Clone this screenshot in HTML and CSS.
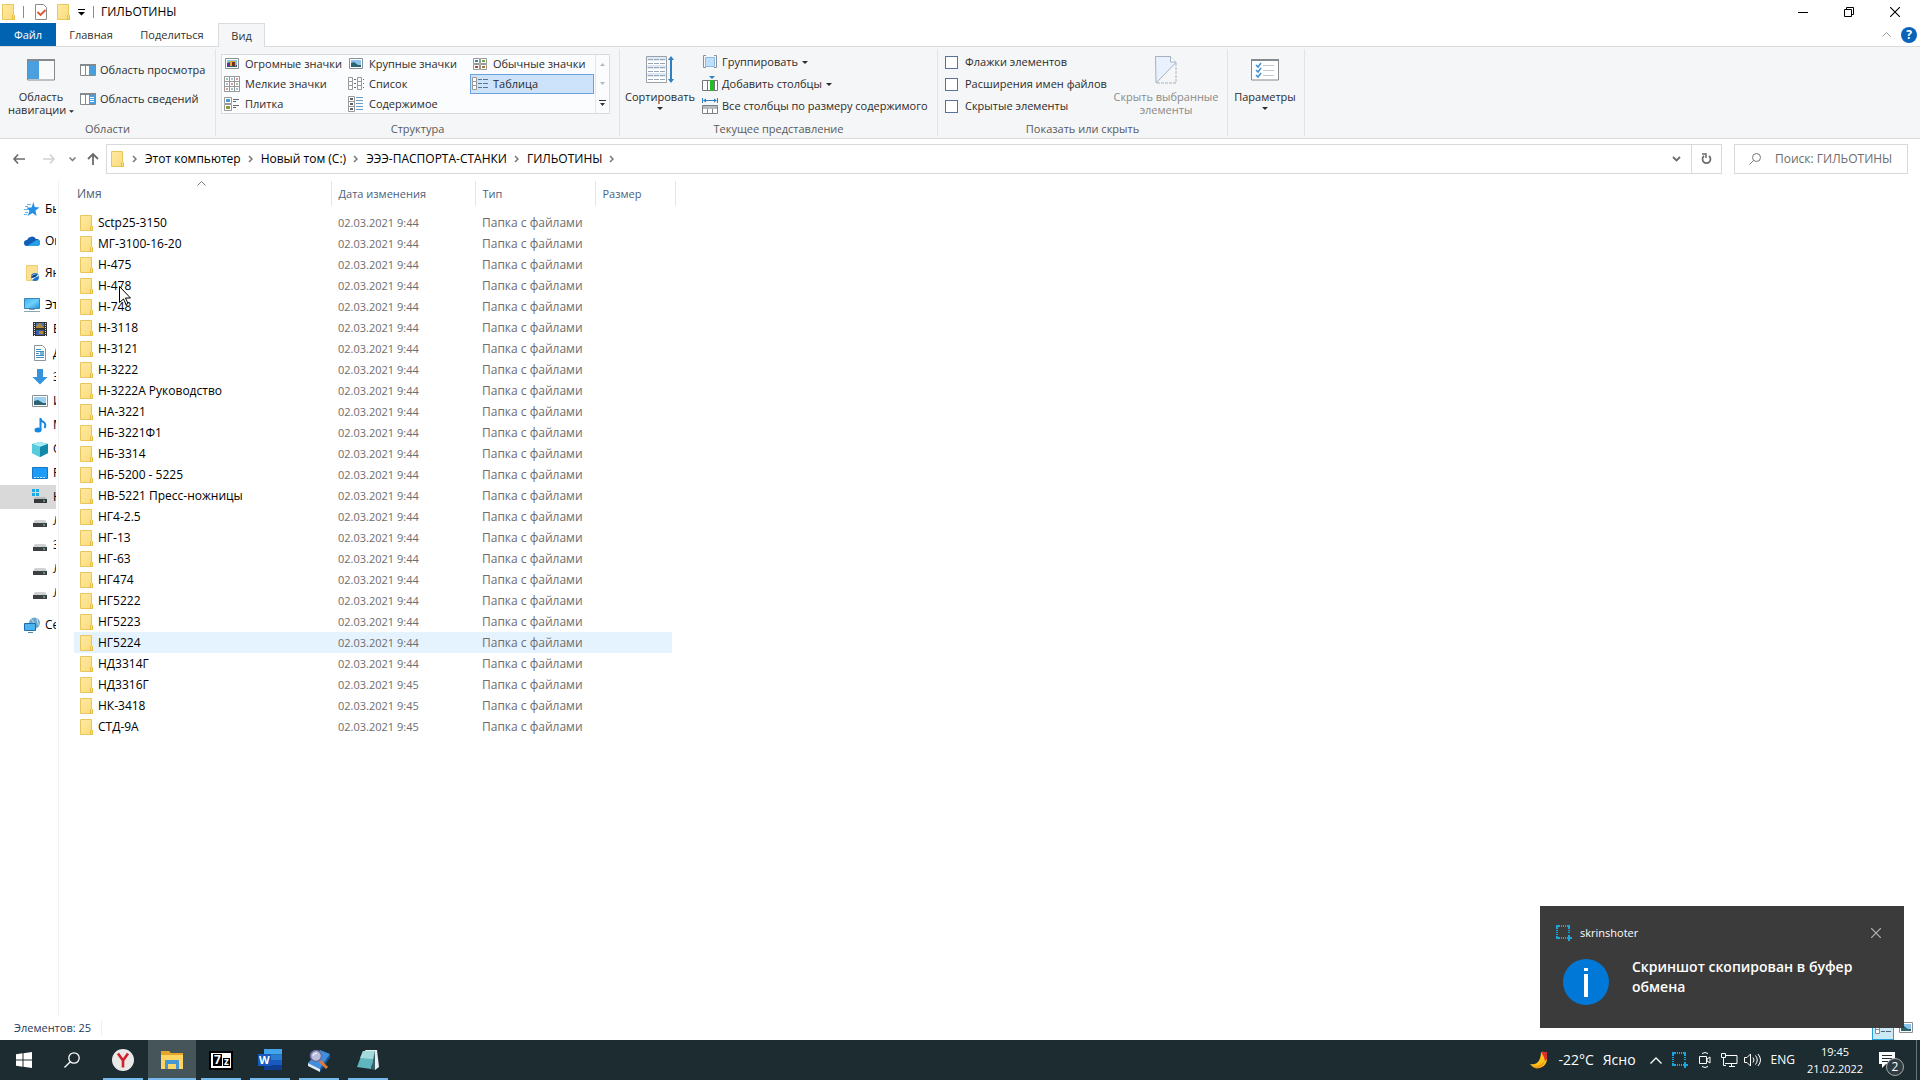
FILE: index.html
```html
<!DOCTYPE html>
<html lang="ru">
<head>
<meta charset="utf-8">
<title>ГИЛЬОТИНЫ</title>
<link rel="stylesheet" href="styles.css">
</head>
<body>
<svg class="defs" aria-hidden="true">
  <defs>
    <linearGradient id="fold" x1="0" y1="0" x2="1" y2="1"><stop offset="0" stop-color="#ffe9a3"/><stop offset="1" stop-color="#fbdc7b"/></linearGradient>
    <linearGradient id="mon" x1="0" y1="0" x2="1" y2="1"><stop offset="0" stop-color="#3fb0ee"/><stop offset=".5" stop-color="#6fd0fb"/><stop offset="1" stop-color="#1f8fdc"/></linearGradient>
  </defs>
  <symbol id="folder" viewBox="0 0 13 16"><path d="M.5.5h11v10l1 1v4H.5z" fill="url(#fold)" stroke="#e8c65a"/><path d="M10.500 15.500v-4l1-1 1 1v4z" fill="#fbdf86" stroke="#e3bd48"/></symbol>
  <symbol id="drive" viewBox="0 0 16 16"><path d="M3 7h10l2 3H1z" fill="#cfd2d4"/><path d="M1 10h14v4H1z" fill="#3c4043"/><path d="M11 11.500h2v1h-2z" fill="#7df07d"/></symbol>
  <symbol id="down" viewBox="0 0 6 3"><path d="M0 0h6L3 3z" fill="currentColor"/></symbol>
  <symbol id="chev" viewBox="0 0 5 8"><path d="M1 1l3 3-3 3" fill="none" stroke="#777" stroke-width="1.500"/></symbol>
  <symbol id="pic" viewBox="0 0 16 16"><path d="M1.500 2.500h13v10h-13z" fill="#fff" stroke="#8a8f94"/><path d="M3 4h10v7H3z" fill="#8cc4ee"/><path d="M3 7l3-1 4 3h3v2H3z" fill="#2c6472"/></symbol>
  <symbol id="snip" viewBox="0 0 16 16"><path d="M0 0h4v2H2v2H0zM5 0h1v2H5zM7 0h1v2H7zM9 0h1v2H9zM11 0h3v4h-2V2h-1zM0 5h2v1H0zM0 7h2v1H0zM0 9h2v1H0zM12 5h2v1h-2zM12 7h2v1h-2zM0 11h2v1h2v2H0zM5 12h1v2H5zM7 12h1v2H7zM9 12h1v2H9zM12 10h2v2h2v2h-2v2h-2v-2h-1v-2h1z" fill="#18a6e0"/></symbol>
</svg>

<div class="window">
  <header class="titlebar">
    <svg class="i13" width="13" height="16"><use href="#folder"/></svg>
    <span class="bar"></span>
    <button class="plain qa-check" aria-label="Свойства"><svg width="12" height="16"><path d="M.5.5h8l3 3v12H.5z" fill="#fff" stroke="#8c8c8c"/><path d="M2.500 8l3 3 5-5" fill="none" stroke="#e0562c" stroke-width="1.800"/></svg></button>
    <button class="plain qa-new" aria-label="Новая папка"><svg width="13" height="16"><use href="#folder"/></svg></button>
    <button class="plain qa-menu" aria-label="Настройка панели"><svg width="7" height="7"><path d="M0 0h7v1H0zM0 3h7L3.500 6.500z"/></svg></button>
    <span class="bar bar2"></span>
    <h1>ГИЛЬОТИНЫ</h1>
    <div class="caption">
      <button class="plain" aria-label="Свернуть"><svg width="10" height="10"><path d="M0 5h10v1H0z"/></svg></button>
      <button class="plain" aria-label="Восстановить"><svg width="10" height="10"><path d="M.5 2.500h7v7h-7zM2.500 2V.5h7v7H8" fill="none" stroke="#000"/></svg></button>
      <button class="plain" aria-label="Закрыть"><svg width="10" height="10"><path d="M0 0l10 10M10 0L0 10" stroke="#000" stroke-width="1.100"/></svg></button>
    </div>
  </header>

  <nav class="tabs">
    <button class="tab file">Файл</button>
    <button class="tab home">Главная</button>
    <button class="tab share">Поделиться</button>
    <button class="tab active">Вид</button>
    <div class="tabs-right">
      <button class="plain" aria-label="Свернуть ленту"><svg width="9" height="5"><path d="M.5 4.500l4-4 4 4" fill="none" stroke="#999"/></svg></button>
      <button class="help" aria-label="Справка">?</button>
    </div>
  </nav>

  <section class="ribbon">
    <div class="group g-panes">
      <div class="group-body">
        <button class="big big-nav">
          <svg width="28" height="22"><path d="M.5 1h27v20H.5z" fill="#fafafa" stroke="#858a8f"/><path d="M0 0h28v2H0z" fill="#858a8f"/><path d="M1 2h11v18H1z" fill="#4a9fdf"/></svg>
          <span>Область<br>навигации <svg width="5" height="3"><use href="#down"/></svg></span>
        </button>
        <div class="stack stack-panes">
          <button class="small"><svg width="16" height="12"><path d="M.5.5h15v11H.5z" fill="#fff" stroke="#858a8f"/><path d="M0 0h16v2H0zM5 1h1v10H5z" fill="#858a8f"/><path d="M9 2h6v9H9z" fill="#4a9fdf"/></svg>Область просмотра</button>
          <button class="small"><svg width="16" height="12"><path d="M.5.5h15v11H.5z" fill="#fff" stroke="#858a8f"/><path d="M0 0h16v2H0zM5 1h1v10H5z" fill="#858a8f"/><path d="M9 2h6v9H9z" fill="#4a9fdf"/><path d="M10 4.500h4M10 6.500h4M10 8.500h4" stroke="#fff"/></svg>Область сведений</button>
        </div>
      </div>
      <div class="group-label">Области</div>
    </div>

    <div class="group g-layout">
      <div class="group-body">
        <div class="gallery">
          <div class="cells">
            <button class="cell"><svg width="16" height="16"><use href="#pic"/><path d="M3 7h3v4H3z" fill="#5a32a8"/><path d="M6 5h6v5H6z" fill="#d8b22c"/><path d="M8 6h3v4H8z" fill="#7c2b20"/></svg>Огромные значки</button>
            <button class="cell"><svg width="16" height="16"><use href="#pic"/></svg>Крупные значки</button>
            <button class="cell"><svg width="16" height="16"><path d="M1.500 2.500h6v5h-6zM8.500 2.500h6v5h-6zM1.500 8.500h6v5h-6zM8.500 8.500h6v5h-6z" fill="#fff" stroke="#999"/><path d="M3 4h3v2H3z" fill="#38a"/><path d="M10 4h3v2h-3z" fill="#6a4"/><path d="M3 10h3v2H3z" fill="#b43"/><path d="M10 10h3v2h-3z" fill="#a73"/></svg>Обычные значки</button>
            <button class="cell"><svg width="16" height="16"><path d="M.5.5h15v15H.5zM.5 5.500h15M.5 10.500h15M5.500.5v15M10.500.5v15" fill="#fff" stroke="#999"/><path d="M3 2v2M13 7v2M8 12v2" stroke="#486"/><path d="M8 2v2M3 7v2M13 12v2" stroke="#48a"/><path d="M13 2v2M8 7v2M3 12v2" stroke="#b33"/></svg>Мелкие значки</button>
            <button class="cell"><svg width="16" height="16"><path d="M.5 1.500h4v4h-4zM.5 5.500h4v4h-4zM.5 9.500h4v4h-4zM9.500 1.500h4v4h-4zM9.500 5.500h4v4h-4zM9.500 9.500h4v4h-4z" fill="#fff" stroke="#999"/><path d="M6 3.500h2M6 7.500h2M6 11.500h2M15 3.500h1M15 7.500h1M15 11.500h1" stroke="#667"/></svg>Список</button>
            <button class="cell selected"><svg width="16" height="16"><path d="M.5 1.500h4v4h-4zM.5 5.500h4v4h-4zM.5 9.500h4v4h-4z" fill="#fff" stroke="#999"/><path d="M6 3.500h4M6 7.500h4M6 11.500h4M11 3.500h5M11 7.500h5M11 11.500h5" stroke="#5c7590"/></svg>Таблица</button>
            <button class="cell"><svg width="16" height="16"><path d="M.5 1.500h7v6h-7zM.5 8.500h7v6h-7z" fill="#fff" stroke="#999"/><path d="M2 3h4v3H2z" fill="#4a9ad6"/><path d="M2 10h4v3H2z" fill="#8a9a3a"/><path d="M9 3.500h6M9 5.500h3M9 9.500h6M9 11.500h3" stroke="#667"/></svg>Плитка</button>
            <button class="cell"><svg width="16" height="16"><path d="M.5.5h6v5h-6zM.5 5.500h6v5h-6zM.5 10.500h6v5h-6z" fill="#fff" stroke="#999"/><path d="M2 3h3M2 8h3M2 13h3" stroke="#567" stroke-width="2"/><path d="M8 1.500h7M8 4.500h7M8 7.500h7M8 10.500h7M8 13.500h7" stroke="#6d9cc4"/></svg>Содержимое</button>
          </div>
          <div class="gallery-scroll">
            <button class="plain" aria-label="Вверх"><svg width="5" height="3"><path d="M0 3h5L2.500 0z" fill="#b5b9be"/></svg></button>
            <button class="plain" aria-label="Вниз"><svg width="5" height="3"><path d="M0 0h5L2.500 3z" fill="#b5b9be"/></svg></button>
            <button class="plain" aria-label="Все виды"><svg width="7" height="6"><path d="M0 0h7v1H0zM1 3h5L3.500 6z" fill="#333"/></svg></button>
          </div>
        </div>
      </div>
      <div class="group-label">Структура</div>
    </div>

    <div class="group g-view">
      <div class="group-body">
        <button class="big big-sort">
          <svg width="28" height="28"><path d="M.5.5h20v26H.5z" fill="#fff" stroke="#9aa0a6"/><path d="M1 1h19v4H1zM1 9h19v4H1zM1 17h19v4H1z" fill="#dbeaf6"/><path d="M2 3.500h17M2 7.500h17M2 11.500h17M2 15.500h17M2 19.500h17M2 23.500h17" stroke="#9aa7b2" stroke-dasharray="5 1"/><path d="M25 2v23" stroke="#2f7fc1" stroke-width="2"/><path d="M22 4l3-4 3 4zM22 23l3 4 3-4z" fill="#2f7fc1"/></svg>
          <span>Сортировать</span><svg width="6" height="3"><use href="#down"/></svg>
        </button>
        <div class="stack">
          <button class="small"><svg width="16" height="16"><path d="M4 1.500H1.500v12H4M12 1.500h2.500v12H12" fill="none" stroke="#8a9095"/><path d="M3.500 3.500h9v9h-9z" fill="#bfe0fb" stroke="#8bbbe5"/></svg>Группировать<svg class="arr" width="6" height="3"><use href="#down"/></svg></button>
          <button class="small"><svg width="16" height="16"><path d="M.5 4.500h15v10H.5z" fill="#fff" stroke="#6f767c"/><path d="M5.500 5v9M12.500 5v9" stroke="#6f767c"/><path d="M8 4h4v11H8z" fill="#25bd25"/><path d="M7 0h6l-3 3z" fill="#2f7fc1"/></svg>Добавить столбцы<svg class="arr" width="6" height="3"><use href="#down"/></svg></button>
          <button class="small"><svg width="16" height="16"><path d="M.5 0v5M15.500 0v5M2 2.500h12" stroke="#2f7fc1"/><path d="M4 .5l-3 2 3 2zM12 .5l3 2-3 2z" fill="#2f7fc1"/><path d="M.5 7.500h15v8H.5zM5.500 10v5M10.500 10v5" fill="#fff" stroke="#7c8287"/><path d="M1 8h14v3H1z" fill="#b5babe"/></svg>Все столбцы по размеру содержимого</button>
        </div>
      </div>
      <div class="group-label">Текущее представление</div>
    </div>

    <div class="group g-show">
      <div class="group-body">
        <div class="stack checks">
          <label><input type="checkbox">Флажки элементов</label>
          <label><input type="checkbox">Расширения имен файлов</label>
          <label><input type="checkbox">Скрытые элементы</label>
        </div>
        <button class="big big-hide" disabled>
          <svg width="22" height="28"><path d="M.5.5h15l5.500 6L1 27z" fill="#e8f1fc" stroke="#a5b2c4"/><path d="M15.500.5V6H21" fill="#fff" stroke="#a5b2c4"/><path d="M21 7v20H1" fill="none" stroke="#a5b2c4" stroke-dasharray="3 1"/></svg>
          <span>Скрыть выбранные<br>элементы</span>
        </button>
      </div>
      <div class="group-label">Показать или скрыть</div>
    </div>

    <div class="group g-options">
      <div class="group-body">
        <button class="big big-opt">
          <svg width="28" height="22"><path d="M.5 1h27v20H.5z" fill="#fff" stroke="#858a8f"/><path d="M0 0h28v2H0z" fill="#858a8f"/><path d="M12 6.500h11M12 11.500h11M12 16.500h11" stroke="#c5c8ca"/><path d="M5 6l2 2 3-4M5 11l2 2 3-4M5 16l2 2 3-4" fill="none" stroke="#3f8fd0" stroke-width="1.500"/></svg>
          <span>Параметры</span><svg width="6" height="3"><use href="#down"/></svg>
        </button>
      </div>
    </div>
  </section>

  <div class="address-row">
    <button class="plain back" aria-label="Назад"><svg width="12" height="10"><path d="M5 .5L1 5l4 4.500M1 5h11" fill="none" stroke="#6b6b6b" stroke-width="1.600"/></svg></button>
    <button class="plain fwd" aria-label="Вперед"><svg width="12" height="10"><path d="M7 .5L11 5 7 9.500M11 5H0" fill="none" stroke="#d2d2d2" stroke-width="1.600"/></svg></button>
    <button class="plain hist" aria-label="Последние"><svg width="7" height="5"><path d="M.5.5l3 3 3-3" fill="none" stroke="#777" stroke-width="1.500"/></svg></button>
    <button class="plain up" aria-label="Вверх"><svg width="12" height="12"><path d="M1 6l5-5 5 5M6 1v11" fill="none" stroke="#6b6b6b" stroke-width="1.800"/></svg></button>
    <div class="address">
      <svg class="addr-icon" width="13" height="16"><use href="#folder"/></svg>
      <svg class="chev" width="5" height="8"><use href="#chev"/></svg>
      <a href="#">Этот компьютер</a><svg class="chev" width="5" height="8"><use href="#chev"/></svg>
      <a href="#">Новый том (C:)</a><svg class="chev" width="5" height="8"><use href="#chev"/></svg>
      <a href="#">ЭЭЭ-ПАСПОРТА-СТАНКИ</a><svg class="chev" width="5" height="8"><use href="#chev"/></svg>
      <a href="#">ГИЛЬОТИНЫ</a><svg class="chev" width="5" height="8"><use href="#chev"/></svg>
      <button class="plain drop" aria-label="Журнал"><svg width="9" height="6"><path d="M1 1l3.500 3.500L8 1" fill="none" stroke="#6b6b6b" stroke-width="1.800"/></svg></button>
      <button class="plain refresh" aria-label="Обновить"><svg width="11" height="12"><path d="M8 3a4 4 0 1 1-5 0" fill="none" stroke="#6b6b6b" stroke-width="1.700"/><path d="M1 1h4v4" fill="none" stroke="#6b6b6b" stroke-width="1.500"/></svg></button>
    </div>
    <div class="search">
      <svg width="12" height="12"><path d="M5 7L.5 11.500" stroke="#777"/><circle cx="7.500" cy="4.500" r="4" fill="none" stroke="#777"/></svg>
      <input type="text" aria-label="Поиск" placeholder="Поиск: ГИЛЬОТИНЫ">
    </div>
  </div>

  <main class="content">
    <nav class="tree">
      <a href="#" class="node top"><svg width="16" height="16"><path d="M9.500 1l1.200 5 4.800.6-4 3 1 5.400-4-3-5 3 2-5L2.500 6.500h5z" fill="#2490e4"/><path d="M3 3.500h4M1 5.500h3M0 8.500h4M1 11.500h3M0 13.500h3" stroke="#63b8f0"/></svg>Бы</a>
      <a href="#" class="node top"><svg width="16" height="16"><path d="M3 13a3 3 0 0 1 0-6 5 5 0 0 1 9-1 3.500 3.500 0 0 1 1 7z" fill="#0f5db5"/><path d="M3 13l8-5a3 3 0 1 1 2 5z" fill="#279fe8"/></svg>On</a>
      <a href="#" class="node top"><svg width="16" height="16"><path d="M2.500.5h11v15h-11z" fill="#fde192" stroke="#efcf71"/><circle cx="11" cy="12" r="4" fill="#1976c9"/><path d="M8 15a4 4 0 0 1 7-4l-3 1z" fill="#fff"/><path d="M7 13q1-4 7-4-2 4-7 4z" fill="#07437f"/></svg>Ян</a>
      <a href="#" class="node top pc"><svg width="16" height="16"><path d="M.5 1.500h15v10H.5z" fill="url(#mon)" stroke="#3a83b5"/><path d="M0 14.500h16M5 12.500h6" stroke="#8ba5b5"/></svg>Эт</a>
      <a href="#" class="node"><svg width="16" height="16"><path d="M1 1h14v14H1z" fill="#333"/><path d="M2.500 2v13M13.500 2v13" stroke="#ddd" stroke-dasharray="1 1"/><path d="M4 2h8v5H4z" fill="#4675b8"/><path d="M4 9h8v5H4z" fill="#3b5fa8"/><path d="M4 5l4-3 4 5H4zM7 10h4v3H7z" fill="#b08a38"/></svg>Ви</a>
      <a href="#" class="node"><svg width="16" height="16"><path d="M2.500.5h8l3 3v12h-11z" fill="#fff" stroke="#8c959c"/><path d="M4 4.500h5M4 6.500h8M4 8.500h3M4 10.500h8M4 12.500h8" stroke="#3e8cc0"/><path d="M8 7h4v3H8z" fill="#72b1d8"/></svg>До</a>
      <a href="#" class="node"><svg width="16" height="16"><path d="M5 0h6v8h4.500L8 15.500.5 8H5z" fill="#3593dd"/></svg>За</a>
      <a href="#" class="node"><svg width="16" height="16"><path d="M.5 2.500h15v11H.5z" fill="#fff" stroke="#8a8f94"/><path d="M2 4h12v8H2z" fill="#9cd0f2"/><path d="M2 8l4-1 5 3h3v2H2z" fill="#2c6472"/></svg>Из</a>
      <a href="#" class="node"><svg width="16" height="16"><path d="M8.500 13V1q0 3 3 4 3 2 1 6" fill="none" stroke="#1488e0" stroke-width="2"/><ellipse cx="6" cy="13" rx="3.500" ry="2.500" fill="#1488e0"/></svg>Му</a>
      <a href="#" class="node"><svg width="16" height="16"><path d="M0 3l8-2 8 2v9l-8 4-8-4z" fill="#2ba8c5"/><path d="M0 3l8-2 8 2-8 3z" fill="#a6ecf2"/><path d="M0 3l8 3v10l-8-4z" fill="#56cbdc"/><path d="M8 6l8-3v9l-8 4z" fill="#1388a8"/></svg>Об</a>
      <a href="#" class="node"><svg width="16" height="16"><path d="M.5 2.500h15v11H.5z" fill="#1e9bf6" stroke="#1476c4"/><path d="M2 12.500h12" stroke="#bfe4ff" stroke-dasharray="2 1"/></svg>Ра</a>
      <a href="#" class="node current"><svg width="16" height="16"><path d="M0 0h3v3H0zM4 0h3v3H4zM0 4h3v3H0zM4 4h3v3H4z" fill="#18a9e6"/><path d="M3 8h10l2 2H1z" fill="#b9bcbe"/><path d="M2 10h13v4H2z" fill="#35393c"/><path d="M11 11.500h2v1h-2z" fill="#7df07d"/></svg>Но</a>
      <a href="#" class="node"><svg width="16" height="16"><use href="#drive"/></svg>Ло</a>
      <a href="#" class="node"><svg width="16" height="16"><use href="#drive"/></svg>За</a>
      <a href="#" class="node"><svg width="16" height="16"><use href="#drive"/></svg>Ло</a>
      <a href="#" class="node last"><svg width="16" height="16"><use href="#drive"/></svg>Ло</a>
      <a href="#" class="node top"><svg width="16" height="16"><circle cx="10.500" cy="6" r="5.500" fill="#6fa9cd"/><path d="M7 2q4 3 2 9M13 1q0 5 2 7" stroke="#c7e3f2" fill="none"/><path d="M.5 6.500h11v7H.5z" fill="#4cb4f0" stroke="#1e6fae"/><path d="M4 15.500h5" stroke="#5b8aa8"/></svg>Се</a>
    </nav>

    <div class="files">
      <table>
        <colgroup><col class="c-name"><col class="c-date"><col class="c-type"><col class="c-size"></colgroup>
        <thead><tr><th class="sorted">Имя<svg class="sort-mark" width="9" height="5"><path d="M.5 4.500l4-4 4 4" fill="none" stroke="#777"/></svg></th><th>Дата изменения</th><th>Тип</th><th>Размер</th></tr></thead>
        <tbody>
          <tr><td><svg width="13" height="16"><use href="#folder"/></svg>Sctp25-3150</td><td>02.03.2021 9:44</td><td>Папка с файлами</td><td></td></tr>
          <tr><td><svg width="13" height="16"><use href="#folder"/></svg>МГ-3100-16-20</td><td>02.03.2021 9:44</td><td>Папка с файлами</td><td></td></tr>
          <tr><td><svg width="13" height="16"><use href="#folder"/></svg>Н-475</td><td>02.03.2021 9:44</td><td>Папка с файлами</td><td></td></tr>
          <tr><td><svg width="13" height="16"><use href="#folder"/></svg>Н-478</td><td>02.03.2021 9:44</td><td>Папка с файлами</td><td></td></tr>
          <tr><td><svg width="13" height="16"><use href="#folder"/></svg>Н-748</td><td>02.03.2021 9:44</td><td>Папка с файлами</td><td></td></tr>
          <tr><td><svg width="13" height="16"><use href="#folder"/></svg>Н-3118</td><td>02.03.2021 9:44</td><td>Папка с файлами</td><td></td></tr>
          <tr><td><svg width="13" height="16"><use href="#folder"/></svg>Н-3121</td><td>02.03.2021 9:44</td><td>Папка с файлами</td><td></td></tr>
          <tr><td><svg width="13" height="16"><use href="#folder"/></svg>Н-3222</td><td>02.03.2021 9:44</td><td>Папка с файлами</td><td></td></tr>
          <tr><td><svg width="13" height="16"><use href="#folder"/></svg>Н-3222А Руководство</td><td>02.03.2021 9:44</td><td>Папка с файлами</td><td></td></tr>
          <tr><td><svg width="13" height="16"><use href="#folder"/></svg>НА-3221</td><td>02.03.2021 9:44</td><td>Папка с файлами</td><td></td></tr>
          <tr><td><svg width="13" height="16"><use href="#folder"/></svg>НБ-3221Ф1</td><td>02.03.2021 9:44</td><td>Папка с файлами</td><td></td></tr>
          <tr><td><svg width="13" height="16"><use href="#folder"/></svg>НБ-3314</td><td>02.03.2021 9:44</td><td>Папка с файлами</td><td></td></tr>
          <tr><td><svg width="13" height="16"><use href="#folder"/></svg>НБ-5200 - 5225</td><td>02.03.2021 9:44</td><td>Папка с файлами</td><td></td></tr>
          <tr><td><svg width="13" height="16"><use href="#folder"/></svg>НВ-5221 Пресс-ножницы</td><td>02.03.2021 9:44</td><td>Папка с файлами</td><td></td></tr>
          <tr><td><svg width="13" height="16"><use href="#folder"/></svg>НГ4-2.5</td><td>02.03.2021 9:44</td><td>Папка с файлами</td><td></td></tr>
          <tr><td><svg width="13" height="16"><use href="#folder"/></svg>НГ-13</td><td>02.03.2021 9:44</td><td>Папка с файлами</td><td></td></tr>
          <tr><td><svg width="13" height="16"><use href="#folder"/></svg>НГ-63</td><td>02.03.2021 9:44</td><td>Папка с файлами</td><td></td></tr>
          <tr><td><svg width="13" height="16"><use href="#folder"/></svg>НГ474</td><td>02.03.2021 9:44</td><td>Папка с файлами</td><td></td></tr>
          <tr><td><svg width="13" height="16"><use href="#folder"/></svg>НГ5222</td><td>02.03.2021 9:44</td><td>Папка с файлами</td><td></td></tr>
          <tr><td><svg width="13" height="16"><use href="#folder"/></svg>НГ5223</td><td>02.03.2021 9:44</td><td>Папка с файлами</td><td></td></tr>
          <tr class="hover"><td><svg width="13" height="16"><use href="#folder"/></svg>НГ5224</td><td>02.03.2021 9:44</td><td>Папка с файлами</td><td></td></tr>
          <tr><td><svg width="13" height="16"><use href="#folder"/></svg>НД3314Г</td><td>02.03.2021 9:44</td><td>Папка с файлами</td><td></td></tr>
          <tr><td><svg width="13" height="16"><use href="#folder"/></svg>НД3316Г</td><td>02.03.2021 9:45</td><td>Папка с файлами</td><td></td></tr>
          <tr><td><svg width="13" height="16"><use href="#folder"/></svg>НК-3418</td><td>02.03.2021 9:45</td><td>Папка с файлами</td><td></td></tr>
          <tr><td><svg width="13" height="16"><use href="#folder"/></svg>СТД-9А</td><td>02.03.2021 9:45</td><td>Папка с файлами</td><td></td></tr>
        </tbody>
      </table>
    </div>
  </main>

  <footer class="status">
    <span class="count">Элементов: 25</span>
    <div class="view-modes">
      <button class="plain on" aria-label="Таблица"><svg width="16" height="16"><path d="M.5 1.500h4v4h-4zM.5 5.500h4v4h-4zM.5 9.500h4v4h-4z" fill="#fff" stroke="#889"/><path d="M6 3.500h4M6 7.500h4M6 11.500h4M11 3.500h5M11 7.500h5M11 11.500h5" stroke="#567"/></svg></button>
      <button class="plain" aria-label="Крупные значки"><svg width="16" height="16"><use href="#pic"/></svg></button>
    </div>
  </footer>
</div>

<footer class="taskbar">
  <button class="task" aria-label="Пуск"><svg width="16" height="16"><path d="M0 2.200L6.500 1.300v6.200H0zM7.500 1.200L16 0v7.500H7.500zM0 8.500h6.500v6.200L0 13.800zM7.500 8.500H16V16l-8.500-1.200z" fill="#fff"/></svg></button>
  <button class="task" aria-label="Поиск"><svg width="16" height="16"><circle cx="10" cy="6" r="5.200" fill="none" stroke="#fff" stroke-width="1.300"/><path d="M6.300 9.700L.5 15.500" stroke="#fff" stroke-width="1.300"/></svg></button>
  <div class="apps">
    <button class="task run" aria-label="Яндекс Браузер"><svg width="24" height="24"><circle cx="12" cy="12" r="11" fill="#e9e9e9"/><path d="M7 5.500l5 7 5-7M12 12v7.500" fill="none" stroke="#d3202a" stroke-width="2.600"/></svg></button>
    <button class="task run open" aria-label="Проводник"><svg width="24" height="24"><path d="M1 3h8l2 2h12v5H1z" fill="#e3a52a"/><path d="M1 7h22v14H1z" fill="#fcd565"/><path d="M5 21v-8q0-1 1-1h12q1 0 1 1v8h-3v-5H8v5z" fill="#4597d3"/></svg></button>
    <button class="task run" aria-label="7-Zip"><svg width="24" height="24"><path d="M1 4h22v17H1z" fill="#fff" stroke="#000" stroke-width="2"/><path d="M4 6h9v12H4zM14 10h7v8h-7z"/><text class="zip-seven" x="5" y="16">7</text><text class="zip-z" x="15" y="17">z</text></svg></button>
    <button class="task run" aria-label="Word"><svg width="24" height="24"><path d="M6 1h18v5.500H6z" fill="#41a5ee"/><path d="M6 6.500h18V12H6z" fill="#2b7cd3"/><path d="M6 12h18v5H6z" fill="#185abd"/><path d="M6 17h18v5H6z" fill="#103f91"/><path d="M0 6h13v12H0z" fill="#185abd"/><text class="word-w" x="1" y="16">W</text></svg></button>
    <button class="task run" aria-label="Поиск файлов"><svg width="24" height="24"><path d="M1 15L13 2l10 4-10 15z" fill="#3f8fe0"/><path d="M1 15l12 6v3L1 18z" fill="#dfe9f5"/><path d="M13 21L23 6v3L13 24z" fill="#1b5cab"/><path d="M13 13l7 7" stroke="#e07b3c" stroke-width="3"/><circle cx="9" cy="8" r="5.500" fill="#b9bedb" stroke="#6d6ca0" stroke-width="1.500"/><path d="M6 8q1-3 4-3" stroke="#fff" fill="none"/></svg></button>
    <button class="task run" aria-label="Блокнот"><svg width="24" height="24"><path d="M9 2h12l2 17-4 3z" fill="#e9eff0"/><path d="M7 3h12l-4 18-14-2z" fill="#5fb6bd"/><path d="M7 3h12l-2 8-13-1z" fill="#a5dadd"/><path d="M19 3v19l-4-1z" fill="#37606b"/></svg></button>
  </div>
  <div class="tray">
    <button class="plain weather"><svg width="20" height="20"><path d="M12 2q6-1 6 5c1 11-12 15-17 7 8 2 11-5 11-12z" fill="#fcc21b"/><path d="M3 15q8 3 13-5-2 10-10 8z" fill="#f59b16"/><path d="M12 2h6v7l-2 2-1-4z" fill="#dd2e2e"/></svg><span>-22°C</span><span>Ясно</span></button>
    <button class="plain t-up" aria-label="Скрытые значки"><svg width="12" height="7"><path d="M.5 6.500L6 1l5.500 5.500" fill="none" stroke="#fff" stroke-width="1.300"/></svg></button>
    <button class="plain t-snip" aria-label="skrinshoter"><svg width="16" height="16"><use href="#snip"/></svg></button>
    <button class="plain t-cam" aria-label="Камера"><svg width="12" height="16"><path d="M3 1.500q3-2 6 0M3 14.500q3 2 6 0" fill="none" stroke="#fff"/><path d="M.5 4.500h7v7h-7zM8 7l3-2v6L8 9z" fill="none" stroke="#fff"/></svg></button>
    <button class="plain t-net" aria-label="Сеть"><svg width="17" height="16"><path d="M5 3.500h11v8H4M.5 1.500h4v4h-4zM2.500 6v7.500H5M8 14.500h6M10.500 12v2" fill="none" stroke="#fff"/></svg></button>
    <button class="plain t-vol" aria-label="Громкость"><svg width="17" height="16"><path d="M.5 5.500H3L6.500 2v12L3 10.500H.5zM9 5.500q2 2.500 0 5M11.500 3.500q3.500 4.500 0 9M14 2q5 6 0 12" fill="none" stroke="#fff"/></svg></button>
    <button class="plain t-lang">ENG</button>
    <button class="plain clock"><span>19:45</span><span>21.02.2022</span></button>
    <button class="plain notes" aria-label="Уведомления"><svg width="17" height="17"><path d="M0 0h16v12H7l-4 4v-4H0z" fill="#fff"/><path d="M3 3.500h10M3 6.500h10M3 9.500h6" stroke="#1f2e33"/></svg><span class="badge">2</span></button>
    <button class="desktop" aria-label="Показать рабочий стол"></button>
  </div>
</footer>

<aside class="toast" role="alert">
  <div class="toast-head">
    <svg width="16" height="16"><use href="#snip"/></svg>
    <span>skrinshoter</span>
    <button class="plain" aria-label="Закрыть"><svg width="10" height="10"><path d="M0 0l10 10M10 0L0 10" stroke="#b5b5b5" stroke-width="1.200"/></svg></button>
  </div>
  <div class="toast-body">
    <svg width="46" height="46"><circle cx="23" cy="23" r="23" fill="#0078d7"/><path d="M21 15h4v23h-4zM21 9h4v3h-4z" fill="#fff"/></svg>
    <p>Скриншот скопирован в буфер обмена</p>
  </div>
</aside>

<svg class="cursor" width="12" height="19"><path d="M.5.5v16l4-3.500 2.500 5.500 2-1-2.500-5.500h5z" fill="#fff" stroke="#000"/></svg>
</body>
</html>
```
FILE: styles.css
```css
* { box-sizing: border-box; }
html, body { height: 100%; }
body {
  margin: 0;
  display: flex;
  flex-direction: column;
  background: #fff;
  color: #000;
  font-family: "Open Sans", "Noto Sans", sans-serif;
  font-size: 12px;
  line-height: 16px;
  overflow: hidden;
}
svg { display: block; flex: none; }
button, input { font: inherit; color: inherit; margin: 0; padding: 0; border: 0; background: none; }
a { color: inherit; text-decoration: none; }
.plain { display: flex; align-items: center; justify-content: center; flex: none; }
.defs { position: absolute; width: 0; height: 0; }
.window { flex: 1; min-height: 0; display: flex; flex-direction: column; }

/* title bar */
.titlebar { display: flex; align-items: center; height: 23px; flex: none; padding-left: 2px; }
.bar { width: 1px; height: 12px; background: #8c8c8c; margin: 0 11px 0 8px; }
.bar2 { margin: 0 7px 0 8px; }
.qa-new { margin-left: 10px; }
.qa-menu { margin: 2px 0 0 8px; }
.titlebar h1 { margin: 0; font-size: 12px; font-weight: 400; }
.caption { display: flex; margin-left: auto; height: 20px; }
.caption button { width: 46px; }
.caption button:last-child { margin-right: 2px; }

/* tabs */
.tabs { display: flex; height: 23px; flex: none; font-size: 11px; }
.tab { text-align: center; color: #333; padding: 0; }
.file { width: 56px; background: #0063b1; color: #fff; }
.home { width: 70px; }
.share { width: 92px; }
.tab.active { width: 47px; height: 24px; border: 1px solid #dadbdc; border-bottom: 0; background: #f5f6f7; z-index: 1; }
.tabs-right { display: flex; align-items: center; gap: 10px; margin-left: auto; padding-right: 3px; }
.help { width: 16px; height: 16px; border-radius: 50%; background: #0a63b8; color: #fff; font-size: 12px; font-weight: 700; line-height: 16px; }

/* ribbon */
.ribbon { display: flex; flex: none; height: 93px; padding: 2px 0; background: #f5f6f7; border: solid #dadbdc; border-width: 1px 0; color: #2b2b2b; font-size: 11px; }
.group { display: flex; flex-direction: column; justify-content: space-between; border-right: 1px solid #e2e3e4; flex: none; }
.group-body { display: flex; }
.group-label { text-align: center; color: #5a5a5a; line-height: 14px; }
.g-panes { width: 216px; }
.g-layout { width: 404px; }
.g-view { width: 318px; }
.g-show { width: 290px; }
.g-options { width: 77px; }
.big { display: flex; flex-direction: column; align-items: center; line-height: 13px; padding-top: 10px; }
.big span { margin-top: 9px; white-space: nowrap; }
.big span svg { display: inline-block; vertical-align: middle; }
.big span + svg { margin-top: 4px; }
.big-nav { width: 66px; margin-left: 8px; margin-right: 6px; }
.big-sort { width: 76px; margin: 0 4px 0 2px; }
.big-sort, .big-hide { padding-top: 7px; }
.big-sort span, .big-hide span { margin-top: 6px; }
.big-hide { width: 112px; margin-left: auto; margin-right: 5px; color: #8a8a8a; }
.big-opt { width: 74px; }
.stack { display: flex; flex-direction: column; gap: 6px; padding-top: 5px; }
.stack-panes { gap: 13px; padding-top: 13px; }
.small { display: flex; align-items: center; gap: 4px; height: 16px; white-space: nowrap; }
.checks label { display: flex; align-items: center; gap: 7px; height: 16px; margin-left: 7px; white-space: nowrap; }
.checks input { appearance: none; width: 13px; height: 13px; border: 1px solid #5a7298; background: #fff; }
.gallery { display: flex; width: 389px; height: 60px; margin: 5px 0 0 5px; border: 1px solid #dadbdc; background: #fbfcfd; }
.cells { display: grid; flex: 1; grid-template-columns: repeat(3, 124px); grid-auto-rows: 20px; margin-top: -1px; }
.cell { display: flex; align-items: center; gap: 5px; padding: 0 1px; height: 20px; border: 1px solid transparent; white-space: nowrap; }
.cell.selected { background: #cde3fb; border-color: #6ba1dc; }
.gallery-scroll { width: 14px; border-left: 1px solid #e4e5e6; display: flex; flex-direction: column; }
.gallery-scroll button { flex: 1; }

/* address bar */
.address-row { display: flex; align-items: center; flex: none; height: 42px; padding: 0 12px 2px 13px; }
.fwd { margin-left: 18px; }
.hist { margin-left: 14px; }
.up { margin: 0 7px 0 11px; }
.address { flex: 1; display: flex; align-items: center; height: 30px; border: 1px solid #d9d9d9; }
.addr-icon { margin-left: 4px; margin-right: 8px; }
.address a { margin: 0 7px 0 8px; }
.address .drop { width: 30px; margin-left: auto; }
.address .refresh { width: 30px; height: 28px; border-left: 1px solid #d9d9d9; }
.search { display: flex; align-items: center; width: 174px; height: 30px; margin-left: 12px; padding-left: 14px; border: 1px solid #d9d9d9; }
.search input { flex: 1; min-width: 0; margin-left: 14px; outline: 0; }
.search input::placeholder { color: #6d6d6d; opacity: 1; }

/* folder tree and list */
.content { flex: 1; min-height: 0; display: flex; }
.tree { width: 59px; flex: none; padding: 16px 2px 0 0; border-right: 1px solid #f0f2f5; }
.node { display: flex; align-items: center; gap: 5px; height: 24px; padding-left: 32px; overflow: hidden; white-space: nowrap; }
.top { padding-left: 24px; margin-bottom: 8px; }
.pc { margin-bottom: 0; }
.last { margin-bottom: 8px; }
.current { background: #d9d9d9; }
.files { flex: 1; padding-left: 15px; }
table { border-collapse: collapse; table-layout: fixed; width: 601px; }
.c-name { width: 257px; }
.c-date { width: 144px; }
.c-type { width: 120px; }
.c-size { width: 80px; }
th { position: relative; height: 25px; padding: 0 0 0 7px; text-align: left; font-size: 11px; font-weight: 400; color: #4c607a; border-right: 1px solid #e5e5e5; }
th.sorted { padding-left: 3px; font-size: 12px; }
.sort-mark { position: absolute; left: 123px; top: 0; }
thead::after { content: ""; display: block; height: 6px; }
td { height: 21px; padding: 0 0 0 7px; color: #6d6d6d; white-space: nowrap; line-height: 16px; }
td:nth-child(2) { font-size: 11px; }
td:first-child { display: flex; align-items: center; gap: 5px; padding-left: 6px; color: #000; }
.hover { background: linear-gradient(#e5f3ff, #e5f3ff) 0 0 / 598px 100% no-repeat; }

/* status bar */
.status { display: flex; align-items: center; flex: none; height: 24px; padding: 0 2px 0 14px; color: #1e395b; font-size: 11px; }
.count { padding-right: 10px; border-right: 1px solid #eee; }
.view-modes { display: flex; margin-left: auto; height: 24px; }
.view-modes button { width: 24px; }
.view-modes .on { width: 22px; background: #cbe8f6; border: 1px solid #26a0da; }

/* taskbar */
.taskbar { display: flex; flex: none; height: 40px; background: #1c2c31; color: #fff; }
.task { width: 48px; height: 40px; display: flex; align-items: center; justify-content: center; }
.apps { display: flex; gap: 1px; margin-left: 3px; }
.run { position: relative; }
.run::after { content: ""; position: absolute; left: 4px; right: 4px; bottom: 0; height: 2px; background: #76b9ed; }
.open { background: #46555a; }
.open::after { left: 0; right: 0; }
.zip-seven { font-size: 12px; font-weight: 700; fill: #fff; }
.zip-z { font-size: 10px; font-weight: 700; fill: #fff; }
.word-w { font-size: 11px; font-weight: 700; fill: #fff; }
.tray { display: flex; align-items: center; margin-left: auto; }
.weather { gap: 9px; font-size: 14px; margin-right: 14px; }
.t-snip { margin-left: 10px; }
.t-cam { margin-left: 11px; }
.t-net { margin-left: 10px; }
.t-vol { margin-left: 6px; }
.t-lang { margin-left: 10px; }
.clock { flex-direction: column; width: 80px; font-size: 11px; line-height: 17px; }
.notes { position: relative; width: 41px; height: 40px; justify-content: flex-start; padding-left: 4px; }
.badge { position: absolute; left: 11px; top: 18px; width: 18px; height: 18px; border: 1px solid #aaa; border-radius: 50%; background: #2f3d42; line-height: 16px; text-align: center; }
.desktop { width: 4px; height: 40px; border-left: 1px solid #66757a; }

/* notification */
.toast { position: fixed; right: 16px; bottom: 52px; width: 364px; height: 122px; padding: 19px 23px 0 16px; background: #3b3b3b; color: #fff; }
.toast-head { display: flex; align-items: center; gap: 8px; height: 16px; font-size: 11px; }
.toast-head button { margin-left: auto; }
.toast-body { display: flex; gap: 23px; margin: 18px 0 0 7px; }
.toast-body p { margin: -2px 0 0; font-size: 14px; font-weight: 600; line-height: 20px; width: 240px; }
.cursor { position: fixed; left: 119px; top: 286px; }
```
